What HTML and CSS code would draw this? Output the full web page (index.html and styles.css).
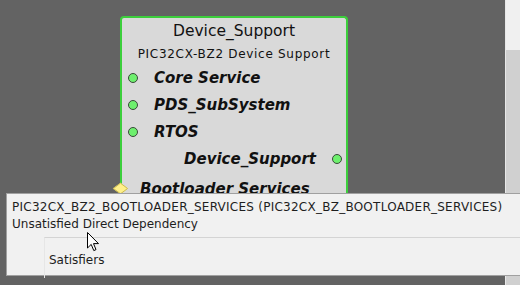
FILE: index.html
```html
<!DOCTYPE html>
<html lang="en">
<head>
  <meta charset="UTF-8" />
  <title>Device_Support</title>
  <link rel="stylesheet" href="styles.css">
</head>
<body>
  <div class="workspace">
    <div class="canvas">
      <div class="node">
        <div class="node-title">Device_Support</div>
        <div class="node-sub">PIC32CX-BZ2 Device Support</div>
        <div class="row"><span class="dot"></span><span class="name">Core Service</span></div>
        <div class="row"><span class="dot"></span><span class="name">PDS_SubSystem</span></div>
        <div class="row"><span class="dot"></span><span class="name">RTOS</span></div>
        <div class="row row-out"><span class="name">Device_Support</span><span class="dot"></span></div>
        <div class="row row-dep"><span class="diamond"></span><span class="name">Bootloader Services</span></div>
      </div>
    </div>
    <div class="side">
      <div class="side-top"></div>
      <div class="side-bottom"></div>
    </div>
  </div>

  <div class="tip">
    <div class="tip-line tip-id">PIC32CX_BZ2_BOOTLOADER_SERVICES (PIC32CX_BZ_BOOTLOADER_SERVICES)</div>
    <div class="tip-line">Unsatisfied Direct Dependency</div>
    <div class="tip-menu">
      <div class="tip-item">Satisfiers</div>
    </div>
  </div>

  <svg class="cursor" width="13" height="20" viewBox="0 0 13 20">
    <path d="M0.5 0.5 L0.5 16 L4.2 12.4 L6.8 18.6 L9 17.6 L6.5 11.6 L11.5 11.6 Z" fill="#fff" stroke="#000" stroke-width="1"/>
  </svg>
</body>
</html>
```

FILE: styles.css
```css
html, body {
  margin: 0;
  padding: 0;
}

body {
  width: 520px;
  height: 285px;
  overflow: hidden;
  position: relative;
  font-family: "DejaVu Sans", Verdana, sans-serif;
}

.workspace {
  display: flex;
  height: 285px;
}

.canvas {
  flex: 1;
  background-color: #636363;
  position: relative;
}

.side {
  width: 14px;
  border-left: 1px solid #e8e8e8;
  display: flex;
  flex-direction: column;
}

.side-top {
  height: 50px;
  background-color: #f0f0f0;
}

.side-bottom {
  flex: 1;
  background-color: #d0d0d0;
}

/* diagram node */
.node {
  position: absolute;
  left: 120px;
  top: 16px;
  width: 224px;
  height: 200px;
  background-color: #d9d9d9;
  border: 2px solid #3ccf3c;
  border-bottom: none;
  border-radius: 4px 4px 0 0;
  color: #111;
}

.node-title {
  text-align: center;
  font-size: 15.5px;
  margin-top: 3px;
  line-height: 20px;
}

.node-sub {
  text-align: center;
  font-size: 12px;
  letter-spacing: 0.7px;
  line-height: 16px;
  margin-top: 5px;
}

.row {
  display: flex;
  align-items: center;
  height: 27px;
  font-size: 15px;
  font-weight: bold;
  font-style: italic;
}

.node-sub + .row {
  margin-top: 2px;
}

.dot {
  width: 8px;
  height: 8px;
  border: 1px solid #3a4a3a;
  border-radius: 50%;
  background-color: #6ef06e;
}

.row .dot {
  margin-left: 6px;
}

.row .name {
  margin-left: 16px;
}

.row-out {
  justify-content: flex-end;
}

.row-out .name {
  margin-left: 0;
}

.row-out .dot {
  margin: 0 4px 0 16px;
}

.row-dep {
  height: 33px;
}

.row-dep .name {
  margin-left: 14px;
}

.diamond {
  width: 9px;
  height: 9px;
  margin-left: -7px;
  background-color: #fff08a;
  border: 1px solid #c8b850;
  transform: scaleY(0.75) rotate(45deg);
}

/* tooltip */
.tip {
  position: absolute;
  left: 6px;
  top: 193px;
  width: 520px;
  height: 81px;
  background-color: #f1f1f1;
  border: 1px solid #a0a0a0;
  font-family: Tahoma, "DejaVu Sans", sans-serif;
  font-size: 12px;
  color: #1e1e1e;
}

.tip-line {
  padding-left: 5px;
  line-height: 17px;
}

.tip-id {
  margin-top: 5px;
  letter-spacing: 0.25px;
}

.tip-menu {
  margin: 4px 0 0 37px;
  border-top: 1px solid #d4d4d4;
  border-left: 1px solid #e6e6e6;
  height: 40px;
}

.tip-item {
  padding: 15px 0 0 4px;
  font-size: 12px;
}

.cursor {
  position: absolute;
  left: 87px;
  top: 232px;
}
```
